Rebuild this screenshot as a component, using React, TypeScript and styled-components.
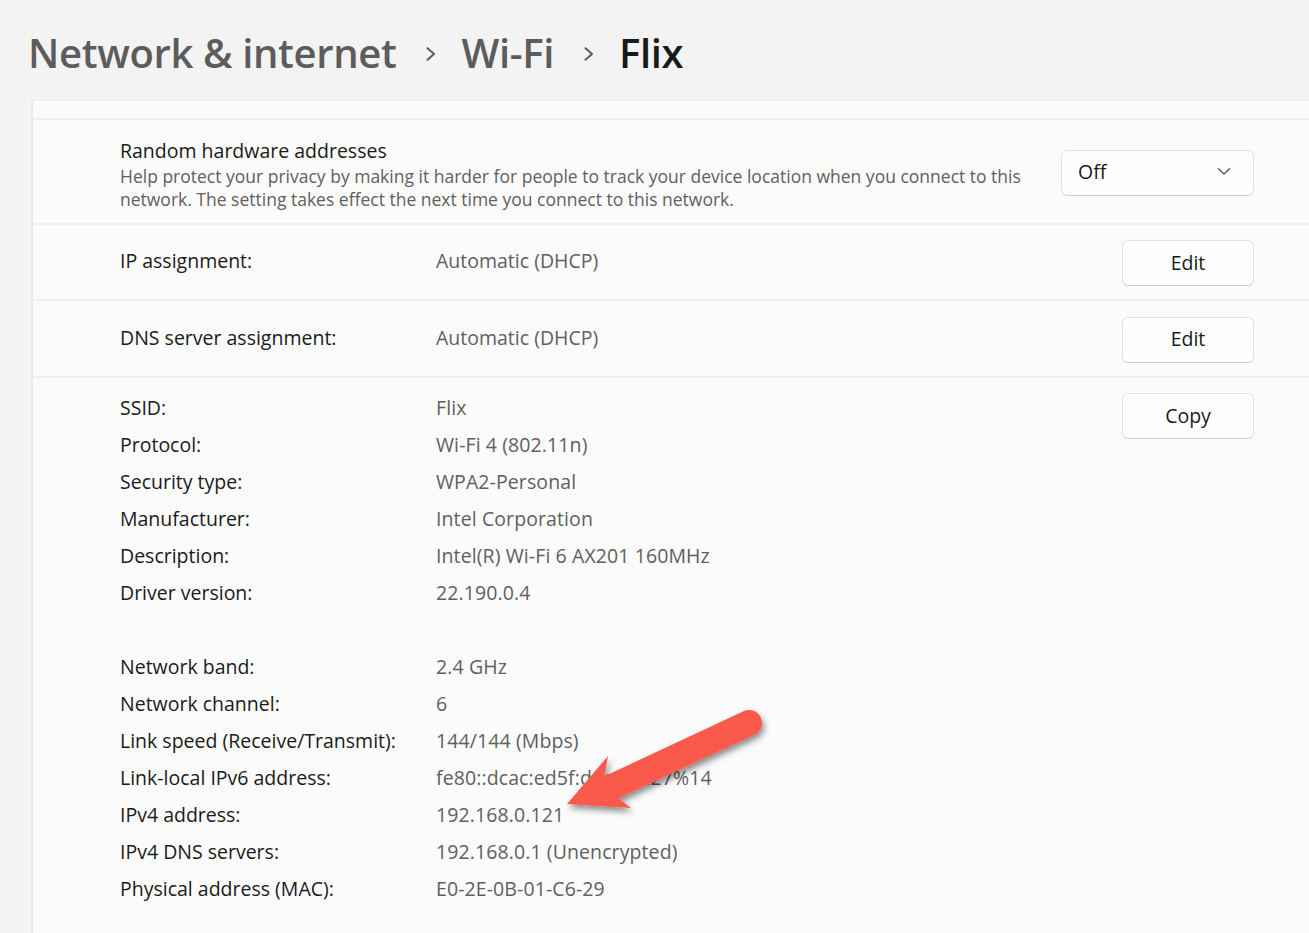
import React from "react";
import styled, { createGlobalStyle } from "styled-components";

const Global = createGlobalStyle`
  html, body { margin: 0; padding: 0; background: #f3f3f3; }
  body { font-family: "Open Sans", "Noto Sans", sans-serif; -webkit-font-smoothing: antialiased; }
  * { box-sizing: border-box; }
`;

const Page = styled.div`
  position: relative;
  width: 1309px;
  height: 933px;
  overflow: hidden;
  background: #f3f3f3;
`;

const Header = styled.header`
  height: 100px;
  padding: 6px 0 0 28px;
  display: flex;
  align-items: center;
`;

const Crumb = styled.span<{ $current?: boolean }>`
  font-size: 40px;
  font-weight: 600;
  letter-spacing: -0.35px;
  color: ${(p) => (p.$current ? "#1a1a1a" : "#5c5c5c")};
  line-height: 1;
`;

const Sep = styled.span`
  display: flex;
  align-items: center;
  padding: 2px 25px 0 30px;
`;

const Card = styled.section`
  margin-left: 31px;
  background: #fbfbfb;
  border-left: 2px solid #e9e9e9;
  border-top: 1px solid #ececec;
  height: 833px;
`;

const TopStrip = styled.div`
  height: 19px;
  border-bottom: 2px solid #f0f0f0;
`;

const Row = styled.div<{ $h: number }>`
  height: ${(p) => p.$h}px;
  display: flex;
  align-items: center;
  padding: 0 55px 0 87px;
  border-bottom: 2px solid #f0f0f0;
`;

const TextCol = styled.div`
  flex: 1;
  display: flex;
  flex-direction: column;
  padding-top: 4px;
`;

const Title = styled.div`
  font-size: 19.5px;
  line-height: 28px;
  color: #1a1a1a;
`;

const Desc = styled.div`
  font-size: 17.5px;
  line-height: 23px;
  color: #5f5f5f;
  white-space: nowrap;
`;

const Label = styled.div`
  width: 316px;
  font-size: 19.5px;
  color: #1a1a1a;
  padding-bottom: 3px;
`;

const Value = styled.div`
  flex: 1;
  font-size: 19.5px;
  color: #606060;
  padding-bottom: 3px;
`;

const Button = styled.button<{ $w?: number }>`
  width: ${(p) => p.$w ?? 132}px;
  height: 46px;
  border: 1px solid #e3e3e3;
  border-bottom-color: #cdcdcd;
  border-radius: 6px;
  background: #fefefe;
  font-family: inherit;
  font-size: 19.5px;
  color: #1a1a1a;
  padding: 0 0 2px;
  display: flex;
  align-items: center;
  justify-content: center;
  margin-top: 2px;
`;

const Dropdown = styled(Button)`
  justify-content: space-between;
  padding: 0 22px 2px 16px;
`;

const Details = styled.div`
  display: flex;
  padding: 11px 55px 0 87px;
`;

const Grid = styled.div`
  flex: 1;
  display: grid;
  grid-template-columns: 316px 1fr;
  grid-auto-rows: 37px;
  align-items: center;
`;

const DLabel = styled.div`
  font-size: 19.5px;
  color: #1a1a1a;
  white-space: nowrap;
`;

const DValue = styled.div`
  font-size: 19.5px;
  color: #606060;
  white-space: nowrap;
  letter-spacing: 0.1px;
`;

const Spacer = styled.div`
  grid-column: 1 / span 2;
`;

const CopyCol = styled.div`
  padding-top: 2px;
`;

const ArrowLayer = styled.svg`
  position: absolute;
  left: 540px;
  top: 700px;
  overflow: visible;
`;

const Chevron = () => (
  <svg width="10" height="14" viewBox="0 0 10 14">
    <path d="M1.5 1.2 L8 7 L1.5 12.8" fill="none" stroke="#5c5c5c" strokeWidth="2" strokeLinecap="round" strokeLinejoin="round" />
  </svg>
);

const Down = () => (
  <svg width="14" height="9" viewBox="0 0 14 9">
    <path d="M1.5 1.8 L7 7 L12.5 1.8" fill="none" stroke="#555" strokeWidth="1.4" strokeLinecap="round" strokeLinejoin="round" />
  </svg>
);

const details: ([string, string] | null)[] = [
  ["SSID:", "Flix"],
  ["Protocol:", "Wi-Fi 4 (802.11n)"],
  ["Security type:", "WPA2-Personal"],
  ["Manufacturer:", "Intel Corporation"],
  ["Description:", "Intel(R) Wi-Fi 6 AX201 160MHz"],
  ["Driver version:", "22.190.0.4"],
  null,
  ["Network band:", "2.4 GHz"],
  ["Network channel:", "6"],
  ["Link speed (Receive/Transmit):", "144/144 (Mbps)"],
  ["Link-local IPv6 address:", "fe80::dcac:ed5f:d6c0:cd27%14"],
  ["IPv4 address:", "192.168.0.121"],
  ["IPv4 DNS servers:", "192.168.0.1 (Unencrypted)"],
  ["Physical address (MAC):", "E0-2E-0B-01-C6-29"],
];

export default function App() {
  return (
    <Page>
      <Global />
      <Header>
        <Crumb>Network &amp; internet</Crumb>
        <Sep><Chevron /></Sep>
        <Crumb>Wi-Fi</Crumb>
        <Sep><Chevron /></Sep>
        <Crumb $current>Flix</Crumb>
      </Header>
      <Card>
        <TopStrip />
        <Row $h={105}>
          <TextCol>
            <Title>Random hardware addresses</Title>
            <Desc>
              Help protect your privacy by making it harder for people to track your device location when you connect to this
              <br />
              network. The setting takes effect the next time you connect to this network.
            </Desc>
          </TextCol>
          <Dropdown as="div" $w={193}>
            <span>Off</span>
            <Down />
          </Dropdown>
        </Row>
        <Row $h={76}>
          <Label>IP assignment:</Label>
          <Value>Automatic (DHCP)</Value>
          <Button>Edit</Button>
        </Row>
        <Row $h={77}>
          <Label>DNS server assignment:</Label>
          <Value>Automatic (DHCP)</Value>
          <Button>Edit</Button>
        </Row>
        <Details>
          <Grid>
            {details.map((d, i) =>
              d ? (
                <React.Fragment key={i}>
                  <DLabel>{d[0]}</DLabel>
                  <DValue>{d[1]}</DValue>
                </React.Fragment>
              ) : (
                <Spacer key={i} />
              )
            )}
          </Grid>
          <CopyCol>
            <Button>Copy</Button>
          </CopyCol>
        </Details>
      </Card>
      <ArrowLayer width="240" height="130" viewBox="0 0 240 130">
        <defs>
          <filter id="sh" x="-20%" y="-20%" width="150%" height="160%">
            <feDropShadow dx="2" dy="4" stdDeviation="3" floodColor="#000" floodOpacity="0.45" />
          </filter>
        </defs>
        <g filter="url(#sh)" fill="#fa5a4c">
          <line x1="209" y1="23" x2="70" y2="88" stroke="#fa5a4c" strokeWidth="26" strokeLinecap="round" />
          <polygon points="27,104 68,56 63,84 74,95 91,108" />
        </g>
      </ArrowLayer>
    </Page>
  );
}
